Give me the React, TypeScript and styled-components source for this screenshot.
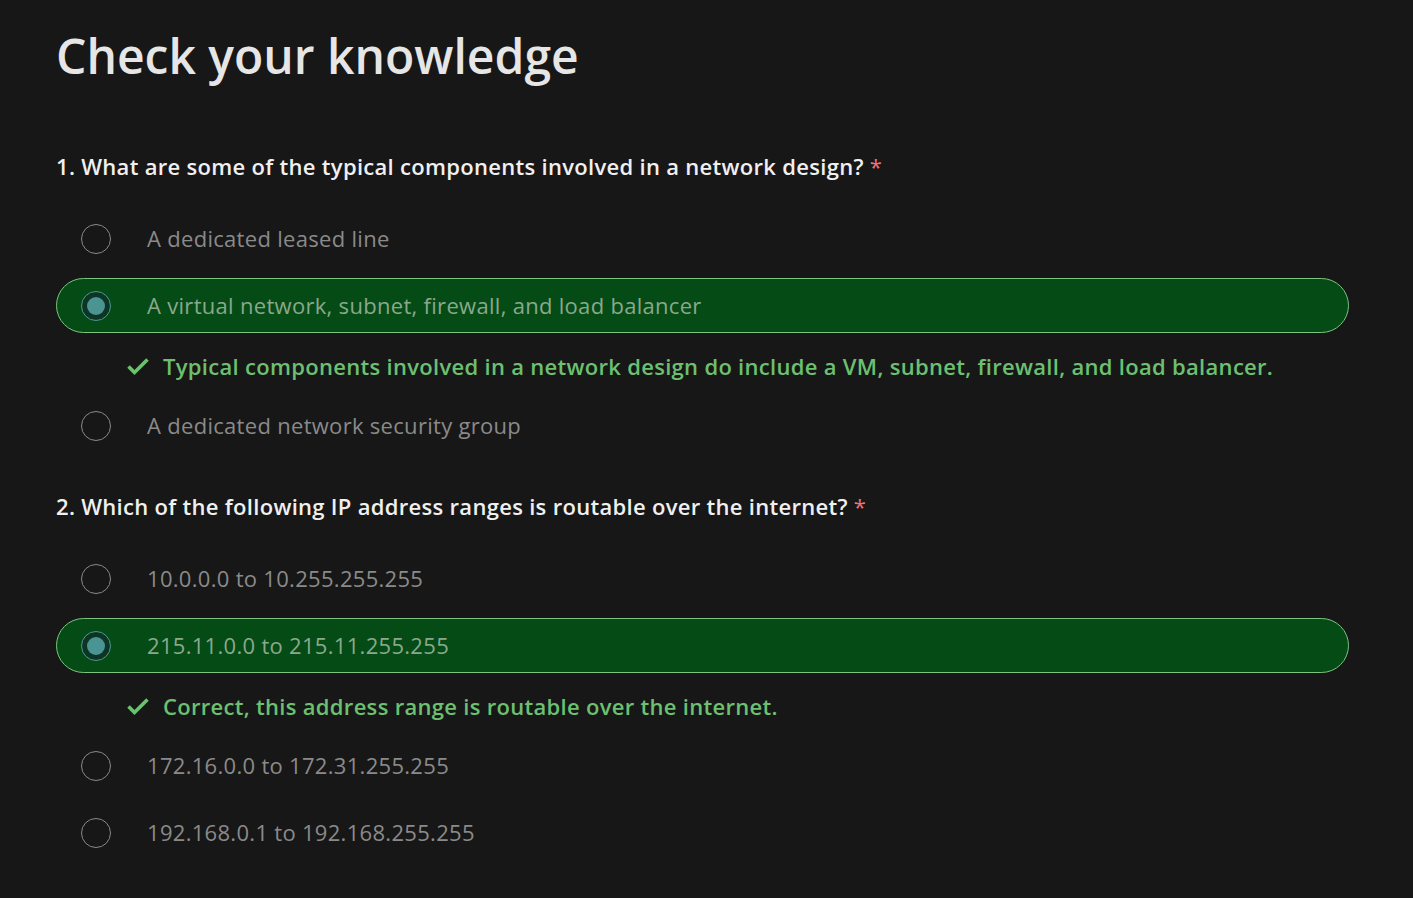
import styled, { createGlobalStyle } from "styled-components"

type Option = {
	label: string,
	selected?: boolean,
	feedback?: string
}

type Question = {
	text: string,
	options: Option[]
}

const questions: Question[] = [
	{
		text: '1. What are some of the typical components involved in a network design?',
		options: [
			{ label: 'A dedicated leased line' },
			{
				label: 'A virtual network, subnet, firewall, and load balancer',
				selected: true,
				feedback: 'Typical components involved in a network design do include a VM, subnet, firewall, and load balancer.'
			},
			{ label: 'A dedicated network security group' }
		]
	},
	{
		text: '2. Which of the following IP address ranges is routable over the internet?',
		options: [
			{ label: '10.0.0.0 to 10.255.255.255' },
			{
				label: '215.11.0.0 to 215.11.255.255',
				selected: true,
				feedback: 'Correct, this address range is routable over the internet.'
			},
			{ label: '172.16.0.0 to 172.31.255.255' },
			{ label: '192.168.0.1 to 192.168.255.255' }
		]
	}
]

function CheckIcon() {
	return (
		<svg width="24" height="20" viewBox="0 0 24 20">
			<path d="M2.5 10.5 L8.5 16.5 L21.5 3.5" fill="none" stroke="#6cc070" strokeWidth="3.6" strokeLinecap="butt" strokeLinejoin="miter" />
		</svg>
	)
}

function App() {
	return (
		<>
			<GlobalStyle />
			<Page>
				<Title>Check your knowledge</Title>
				{questions.map(q => (
					<QuestionBlock key={q.text}>
						<QuestionText>
							{q.text} <Required>*</Required>
						</QuestionText>
						<OptionList>
							{q.options.map(opt => (
								<div key={opt.label} style={{ display: 'contents' }}>
									<OptionRow $selected={opt.selected}>
										<Radio $selected={opt.selected} />
										<OptionLabel $selected={opt.selected}>{opt.label}</OptionLabel>
									</OptionRow>
									{opt.feedback && (
										<Feedback>
											<CheckIcon />
											<span>{opt.feedback}</span>
										</Feedback>
									)}
								</div>
							))}
						</OptionList>
					</QuestionBlock>
				))}
			</Page>
		</>
	)
}

const GlobalStyle = createGlobalStyle`
	html, body {
		margin: 0;
		padding: 0;
		background: #171717;
	}
	body {
		font-family: "Open Sans", "Noto Sans", sans-serif;
	}
`

const Page = styled.div`
	display: flex;
	flex-direction: column;
	padding: 22px 64px 40px 56px;
	min-height: 898px;
	box-sizing: border-box;
	background: #171717;
`

const Title = styled.h1`
	margin: 0 0 61px 0;
	font-size: 48px;
	font-weight: 600;
	line-height: 68px;
	color: #e6e6e6;
	letter-spacing: 0;
`

const QuestionBlock = styled.div`
	display: flex;
	flex-direction: column;
	margin-bottom: 38px;
`

const QuestionText = styled.div`
	font-size: 22px;
	font-weight: 600;
	line-height: 30px;
	color: #f0f0f0;
	letter-spacing: 0.3px;
	margin-bottom: 30px;
`

const Required = styled.span`
	color: #f1707b;
	font-weight: 400;
`

const OptionList = styled.div`
	display: flex;
	flex-direction: column;
	gap: 12px;
`

const OptionRow = styled.div<{ $selected?: boolean }>`
	display: flex;
	align-items: center;
	height: 55px;
	box-sizing: border-box;
	padding-left: 24px;
	border-radius: 28px;
	border: 1px solid ${p => p.$selected ? '#7cc47f' : 'transparent'};
	background: ${p => p.$selected ? '#054b16' : 'transparent'};
`

const Radio = styled.span<{ $selected?: boolean }>`
	flex: none;
	width: 30px;
	height: 30px;
	box-sizing: border-box;
	border-radius: 50%;
	border: 1px solid ${p => p.$selected ? '#4a9a96' : '#8a8a8a'};
	background: ${p => p.$selected ? '#0e3523' : 'transparent'};
	display: flex;
	align-items: center;
	justify-content: center;
	margin-right: 36px;
	&::after {
		content: '';
		display: ${p => p.$selected ? 'block' : 'none'};
		width: 18px;
		height: 18px;
		border-radius: 50%;
		background: #4a9594;
	}
`

const OptionLabel = styled.span<{ $selected?: boolean }>`
	font-size: 22px;
	line-height: 30px;
	color: ${p => p.$selected ? '#8aa88c' : '#8a8a8a'};
	letter-spacing: 0.3px;
	margin-top: -2px;
`

const Feedback = styled.div`
	display: flex;
	align-items: center;
	gap: 13px;
	height: 41px;
	padding-left: 70px;
	font-size: 22px;
	font-weight: 600;
	color: #6cc070;
	letter-spacing: 0.3px;
`

export default App
